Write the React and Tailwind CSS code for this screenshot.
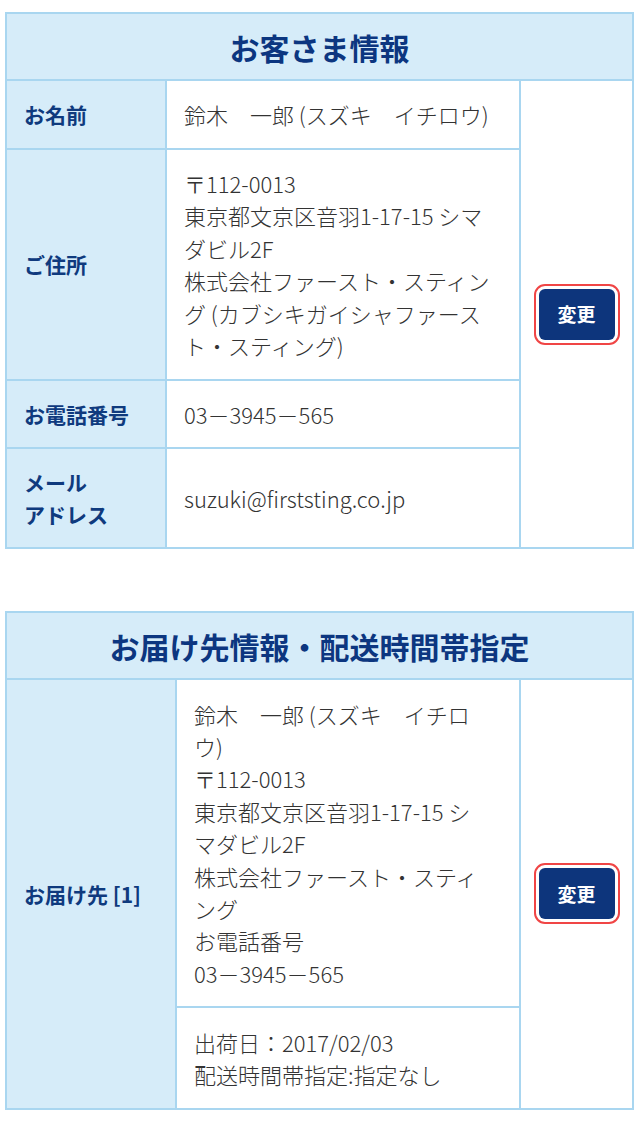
const customer = [
    { label: "お名前", lines: ["鈴木　一郎 (スズキ　イチロウ)"] },
    {
        label: "ご住所",
        lines: [
            "〒112-0013",
            "東京都文京区音羽1-17-15 シマダビル2F",
            "株式会社ファースト・スティング (カブシキガイシャファースト・スティング)",
        ],
    },
    { label: "お電話番号", lines: ["03－3945－565"] },
    { label: "メール\nアドレス", lines: ["suzuki@firststing.co.jp"] },
];

const delivery = [
    "鈴木　一郎 (スズキ　イチロウ)",
    "〒112-0013",
    "東京都文京区音羽1-17-15 シマダビル2F",
    "株式会社ファースト・スティング",
    "お電話番号",
    "03－3945－565",
];

const cellBorder = "border-2 border-[#a9d6f0]";
const labelCell = `${cellBorder} bg-[#d6ecf9] px-[17px] py-[17px] text-left align-middle text-[21px] font-bold leading-[32px] text-[#0f3a7e] whitespace-pre-line`;
const valueCell = `${cellBorder} py-[17.2px] pl-[17px] align-middle text-[22px] font-light leading-[32.4px]`;
const headCell = `${cellBorder} bg-[#d6ecf9] py-[11.5px] text-center text-[30px] font-bold leading-[42px] text-[#0c3680]`;

function ChangeButton() {
    return (
        <button
            type="button"
            className="h-[51px] w-[76px] rounded-[6px] bg-[#0d357c] text-[19px] font-bold text-white outline-2 outline-offset-[3px] outline-[#f04545]"
        >
            変更
        </button>
    );
}

function Lines({ lines }) {
    return lines.map((line, i) => <div key={i}>{line}</div>);
}

export default function App() {
    return (
        <div
            className="min-h-screen bg-white pt-[12px] pb-[20px] text-[#333333]"
            style={{ fontFamily: '"Noto Sans CJK JP", "Noto Sans", sans-serif' }}
        >
            {/* お客さま情報 */}
            <table className="ml-[5px] w-[627px] table-fixed border-collapse">
                <colgroup>
                    <col className="w-[160px]" />
                    <col className="w-[354px]" />
                    <col className="w-[113px]" />
                </colgroup>
                <thead>
                    <tr>
                        <th colSpan={3} className={headCell}>
                            お客さま情報
                        </th>
                    </tr>
                </thead>
                <tbody>
                    {customer.map((row, i) => (
                        <tr key={row.label}>
                            <th className={labelCell}>{row.label}</th>
                            <td className={`${valueCell} pr-[22px]`}>
                                <Lines lines={row.lines} />
                            </td>
                            {i === 0 && (
                                <td rowSpan={customer.length} className={`${cellBorder} text-center align-middle`}>
                                    <ChangeButton />
                                </td>
                            )}
                        </tr>
                    ))}
                </tbody>
            </table>

            {/* お届け先情報・配送時間帯指定 */}
            <table className="mt-[62px] ml-[5px] w-[627px] table-fixed border-collapse">
                <colgroup>
                    <col className="w-[170px]" />
                    <col className="w-[344px]" />
                    <col className="w-[113px]" />
                </colgroup>
                <thead>
                    <tr>
                        <th colSpan={3} className={headCell}>
                            お届け先情報・配送時間帯指定
                        </th>
                    </tr>
                </thead>
                <tbody>
                    <tr>
                        <th rowSpan={2} className={labelCell}>
                            お届け先 [1]
                        </th>
                        <td className={`${valueCell} pr-[30px]`}>
                            <Lines lines={delivery} />
                        </td>
                        <td rowSpan={2} className={`${cellBorder} text-center align-middle`}>
                            <ChangeButton />
                        </td>
                    </tr>
                    <tr>
                        <td className={`${valueCell} pr-[30px]`}>
                            <div>出荷日：2017/02/03</div>
                            <div>配送時間帯指定:指定なし</div>
                        </td>
                    </tr>
                </tbody>
            </table>
        </div>
    );
}
